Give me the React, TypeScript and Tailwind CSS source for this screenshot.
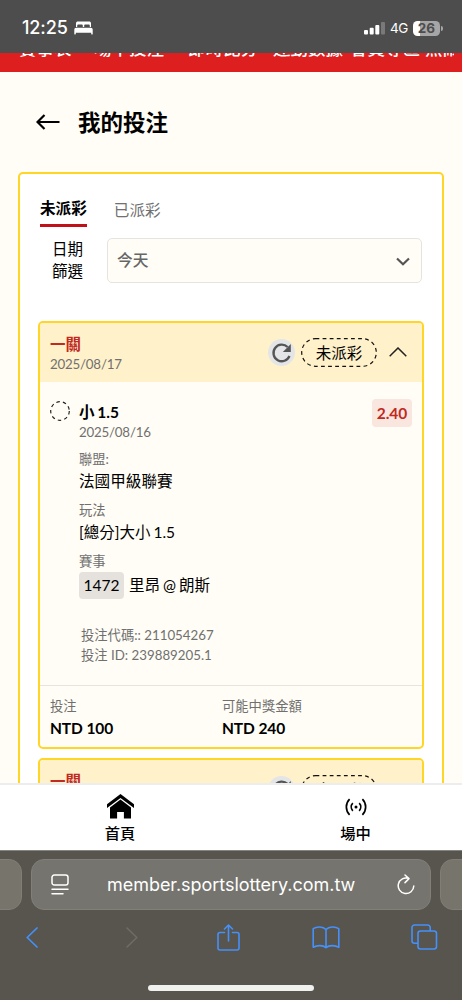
import React from 'react';

interface Bet {
  id: string;
  title: string;
  createdAt: string;
  status: string;
  pick: string;
  matchDate: string;
  odds: string;
  league: string;
  market: string;
  matchNo: string;
  teams: string;
  code: string;
  stake: string;
  payout: string;
}

const bets: Bet[] = [
  {
    id: '239889205.1',
    title: '一關',
    createdAt: '2025/08/17',
    status: '未派彩',
    pick: '小 1.5',
    matchDate: '2025/08/16',
    odds: '2.40',
    league: '法國甲級聯賽',
    market: '[總分]大小 1.5',
    matchNo: '1472',
    teams: '里昂 @ 朗斯',
    code: '211054267',
    stake: 'NTD 100',
    payout: 'NTD 240',
  },
];

const StatusBar = () => (
  <div className="h-[53px] shrink-0 bg-[#4d4d4d] text-white flex items-center justify-between pl-[22px] pr-[19px] pt-[3px] font-['Inter',sans-serif]">
    <div className="flex items-center gap-[5px]">
      <span className="text-[18px] leading-6 font-medium w-[47px] whitespace-nowrap tracking-[-0.1px]">12:25</span>
      <svg width="19" height="14" viewBox="0 0 19 14" fill="#fff">
        <path d="M2 6V2.4C2 1 2.8.5 4 .5h11c1.200 0 2 .5 2 1.900V6h-1.200V4.800c0-.9-.5-1.300-1.300-1.300h-3c-.9 0-1.300.4-1.300 1.300V6H8.800V4.800c0-.9-.5-1.300-1.300-1.300h-3c-.8 0-1.300.4-1.300 1.300V6z" />
        <path d="M.3 13V9c0-1.500.7-2.300 2-2.300h14.400c1.300 0 2 .8 2 2.300v4c0 .4-.2.5-.5.5h-.5c-.3 0-.5-.2-.5-.5v-1.200H1.800V13c0 .3-.2.5-.5.5H.8c-.3 0-.5-.2-.5-.5z" />
      </svg>
    </div>
    <div className="flex items-center">
      <svg width="21" height="14" viewBox="0 0 21 14" fill="#fff" className="mr-[5px]">
        <rect x="0" y="9" width="4" height="4.500" rx="1" />
        <rect x="5.700" y="6.700" width="4" height="6.800" rx="1" />
        <rect x="11.300" y="4" width="4" height="9.500" rx="1" />
        <rect x="17" y="1" width="4" height="12.500" rx="1" opacity=".25" />
      </svg>
      <span className="text-[13.5px] leading-5 w-[19px] mr-[4px] whitespace-nowrap tracking-[-0.4px]">4G</span>
      <div className="flex items-center gap-px">
        <div className="w-[27px] h-[15px] rounded-[4.5px] bg-[linear-gradient(90deg,#fff_27%,#a6a6a6_27%)] text-[#4d4d4d] text-[13.5px] font-bold leading-[15px] text-center">26</div>
        <div className="w-[2px] h-[5px] rounded-r-full bg-[#a6a6a6]"></div>
      </div>
    </div>
  </div>
);

// Site menu, mostly scrolled away under the status bar
const SiteMenu = () => (
  <div className="h-[19px] shrink-0 overflow-hidden bg-[#dd1f20] text-white text-[17.5px] font-medium leading-[20px]">
    <div className="flex -mt-[14px] pl-[19px] whitespace-nowrap">
      <span className="w-[75px]">賽事表</span>
      <span className="w-[94px]">場中投注</span>
      <span className="w-[85px]">即時比分</span>
      <span className="w-[77px]">運動數據</span>
      <span className="w-[75px]">會員專區</span>
      <span className="w-[29px] overflow-hidden">熱鬧</span>
    </div>
  </div>
);

const RefreshIcon = () => (
  <span className="w-[27px] h-[27px] rounded-full bg-[#e4e5e7] flex items-center justify-center">
    <svg width="27" height="27" viewBox="0 0 27 27" fill="none" stroke="#555" strokeWidth="2.300">
      <path d="M21.500 17A8.300 8.300 0 1 1 19.600 8" />
      <path d="M22.800 5v8h-8z" fill="#555" stroke="none" />
    </svg>
  </span>
);

const BetCard: React.FC<{ bet: Bet }> = ({ bet }) => (
  <article className="rounded-[5px] border-2 border-[#ffd526] bg-[#fffdf5] overflow-hidden">
    <header className="h-[59px] bg-[#fff1ca] flex justify-between pl-[10px] pr-[15px]">
      <div className="pt-[11px]">
        <h2 className="text-[15.5px] leading-5 font-bold text-[#bf2a23]">{bet.title}</h2>
        <p className="text-[13.3px] leading-5 tracking-[-0.2px] text-[#707070]">{bet.createdAt}</p>
      </div>
      <div className="flex items-center h-[29px] mt-[15px]">
        <RefreshIcon />
        <div className="relative w-[76px] h-[29px] ml-[6px] mr-[12px] text-[15.5px] leading-[30px] text-center">
          <svg width="76" height="29" className="absolute inset-0" fill="none" stroke="#111" strokeWidth="1.200">
            <rect x=".7" y=".7" width="74.600" height="27.600" rx="13.800" strokeDasharray="3.800 3.300" />
          </svg>
          {bet.status}
        </div>
        <svg width="18" height="10" viewBox="0 0 18 10" fill="none" stroke="#222" strokeWidth="1.500" className="-mt-[2px]">
          <path d="M.7 9.300 9 1l8.300 8.300" />
        </svg>
      </div>
    </header>

    <div className="flex pl-[10px] pr-[10px] pt-[17px] pb-[19px]">
      <svg width="20" height="20" viewBox="0 0 20 20" className="mt-[2px] mr-[9px] shrink-0" fill="none" stroke="#222" strokeWidth="1.200">
        <circle cx="10" cy="10" r="9.300" strokeDasharray="3.500 3.140" />
      </svg>
      <div className="flex-1 pt-[3px]">
        <h3 className="text-[15.5px] leading-5 font-bold [word-spacing:-1px]">{bet.pick}</h3>
        <p className="text-[13.3px] leading-5 tracking-[-0.2px] text-[#707070]">{bet.matchDate}</p>
        <p className="mt-[7px] text-[13.3px] leading-5 text-[#707070]">聯盟:</p>
        <p className="text-[15.6px] leading-6">{bet.league}</p>
        <p className="mt-[7px] text-[13.3px] leading-5 text-[#707070]">玩法</p>
        <p className="text-[15.5px] leading-6 [word-spacing:-1px]">{bet.market}</p>
        <p className="mt-[7px] text-[13.3px] leading-5 text-[#707070]">賽事</p>
        <div className="mt-px flex items-center gap-[5px] text-[15.5px] leading-[27px]">
          <span className="w-[45px] h-[27px] rounded-[4px] bg-[#e5e2dd] text-center">{bet.matchNo}</span>
          <span className="[word-spacing:-1px]">{bet.teams}</span>
        </div>
        <div className="mt-[26px] pl-[2px] text-[13.3px] leading-5 text-[#707070]">
          <p>投注代碼:: {bet.code}</p>
          <p>投注 ID: {bet.id}</p>
        </div>
        <div className="h-px"></div>
      </div>
      <span className="w-10 h-7 rounded-[4px] bg-[#f8e6df] text-[#bf2a23] text-[15.5px] leading-[28px] font-bold text-center">
        {bet.odds}
      </span>
    </div>

    <footer className="flex h-[62px] border-t border-[#e5e4e1] pl-[10px] pt-[10px]">
      <div className="w-[172px]">
        <p className="text-[13.3px] leading-5 text-[#707070]">投注</p>
        <p className="mt-[2px] text-[15.5px] leading-5 font-bold tracking-[-0.1px]">{bet.stake}</p>
      </div>
      <div>
        <p className="text-[13.3px] leading-5 text-[#707070]">可能中獎金額</p>
        <p className="mt-[2px] text-[15.5px] leading-5 font-bold tracking-[-0.1px]">{bet.payout}</p>
      </div>
    </footer>
  </article>
);

const BottomNav = () => (
  <nav className="h-[67px] shrink-0 border-t-2 border-[#ededed] bg-white flex text-[15.3px] leading-5 font-medium">
    <div className="w-[240px] shrink-0 flex flex-col items-center pt-[9px]">
      <svg width="27" height="25" viewBox="0 0 27 25" fill="#000">
        <path d="M13.500 0 27 10.300v3.700L13.500 4 0 14v-3.700z" />
        <path d="M13.500 5.600 24 13.400V24.500h-7.100V18h-6.800v6.500H3V13.400z" />
      </svg>
      <span className="mt-[4px]">首頁</span>
    </div>
    <div className="w-[231px] shrink-0 flex flex-col items-center pt-[13px]">
      <svg width="22" height="18" viewBox="0 0 22 18" fill="none" stroke="#000" strokeWidth="1.700">
        <circle cx="11" cy="9" r="1.500" fill="#000" stroke="none" />
        <path d="M7.800 5.200a5.500 5.500 0 0 0 0 7.600M14.200 5.200a5.500 5.500 0 0 1 0 7.600M4.600 1.200a11 11 0 0 0 0 15.600M17.400 1.200a11 11 0 0 1 0 15.600" />
      </svg>
      <span className="mt-[7px]">場中</span>
    </div>
  </nav>
);

const BrowserBar = () => (
  <div className="h-[150px] shrink-0 bg-[#57554d] border-t border-[#858580] overflow-hidden flex flex-col">
    <div className="mt-[8px] h-[51px] flex gap-[9px] -ml-[20px] w-[502px]">
      <div className="w-[42px] rounded-[13px] bg-[#77746c] border border-[#817e76]"></div>
      <div className="w-[400px] rounded-[13px] bg-[#75746e] border border-[#807f78] flex items-center text-white">
        <svg width="18" height="21" viewBox="0 0 18 21" fill="none" stroke="#fff" strokeWidth="1.500" strokeLinecap="round" className="ml-[19px]">
          <rect x="1" y="1" width="16" height="10" rx="2.300" />
          <path d="M1 15.300h16M1 19.700h11" />
        </svg>
        <span className="ml-[38px] w-[249px] text-[18px] tracking-[-0.04px] font-['Inter',sans-serif] whitespace-nowrap">member.sportslottery.com.tw</span>
        <svg width="18" height="21" viewBox="0 0 18 21" fill="none" stroke="#fff" strokeWidth="1.500" strokeLinecap="round" strokeLinejoin="round" className="ml-[41px]">
          <path d="M11.700 4.400A7.800 7.800 0 1 0 16.800 12M8 1l4 3.600-4 4" />
        </svg>
      </div>
      <div className="w-[42px] rounded-[13px] bg-[#77746c] border border-[#817e76]"></div>
    </div>
    <div className="mt-[13px] h-[28px] flex items-center pl-[26px]">
      <svg width="12" height="21" viewBox="0 0 12 21" fill="none" stroke="#4590fa" strokeWidth="1.700" strokeLinecap="round" strokeLinejoin="round">
        <path d="M11 1 1.200 10.500 11 20" />
      </svg>
      <svg width="12" height="21" viewBox="0 0 12 21" fill="none" stroke="#6d6c66" strokeWidth="1.600" strokeLinecap="round" strokeLinejoin="round" className="ml-[88px]">
        <path d="m1 1 9.800 9.500L1 20" />
      </svg>
      <svg width="23" height="27" viewBox="0 0 23 27" fill="none" stroke="#4590fa" strokeWidth="1.600" strokeLinecap="round" strokeLinejoin="round" className="ml-[79px]">
        <path d="M7.500 8.500H3a2 2 0 0 0-2 2V24a2 2 0 0 0 2 2h17a2 2 0 0 0 2-2V10.500a2 2 0 0 0-2-2h-4.500M11.500 17V1.200M7.500 5l4-4 4 4" />
      </svg>
      <svg width="28" height="23" viewBox="0 0 28 23" fill="none" stroke="#4590fa" strokeWidth="1.600" strokeLinejoin="round" className="ml-[72px]">
        <path d="M14 3.500C11 .4 5 .2 1.200 2.700v18.600C5 19 11 19 14 21.700c3-2.700 9-2.700 12.800-.4V2.700C23 .2 17 .4 14 3.500zM14 3.500v18.200" />
      </svg>
      <svg width="27" height="26" viewBox="0 0 27 26" fill="none" stroke="#4590fa" strokeWidth="1.600" className="ml-[71px]">
        <rect x="7" y="7" width="18.500" height="18" rx="2.500" />
        <path d="M7 19.300H3.500A2.500 2.500 0 0 1 1 16.800V3.500A2.500 2.500 0 0 1 3.500 1h13.200a2.500 2.500 0 0 1 2.500 2.500V7" />
      </svg>
    </div>
    <div className="mt-[34px] mx-auto w-[166px] h-[6px] shrink-0 rounded-full bg-[#f0f0ee]"></div>
  </div>
);

export default function App() {
  return (
    <div className="w-[462px] h-[1000px] overflow-hidden flex flex-col bg-[#fffdf5] text-black font-['Lato','Noto_Sans_CJK_TC',sans-serif]">
      <StatusBar />
      <SiteMenu />

      <main className="flex-1 min-h-0 overflow-hidden">
        <div className="h-[100px] flex items-center pl-[36px] gap-[18px]">
          <svg width="24" height="16" viewBox="0 0 24 16" fill="none" stroke="#000" strokeWidth="2.200">
            <path d="M23.500 8H1.500M8.500 1l-7 7 7 7" />
          </svg>
          <h1 className="mt-[2px] text-[22.5px] leading-8 font-bold">我的投注</h1>
        </div>

        <section className="mx-[18px] h-[900px] rounded-[5px] border-2 border-[#ffd526] bg-white px-[18px]">
          <div className="pl-[2px] pt-[21px] flex gap-[27px] text-[15.6px]">
            <button className="h-[32px] flex flex-col items-start border-b-[3px] border-[#c0101a] pt-[2px] leading-[22px] font-bold">未派彩</button>
            <button className="h-[32px] flex flex-col items-start pt-[4px] leading-[22px] text-[#707070]">已派彩</button>
          </div>

          <div className="mt-[11px] flex items-center">
            <label className="w-[69px] pl-[14px] pr-[20px] -mt-px text-[15.5px] leading-[22px]">日期篩選</label>
            <div className="w-[315px] h-[45px] rounded-[5px] border border-[#e5e4e1] bg-[#fffdf5] flex items-center justify-between pl-[9px] pr-[11px]">
              <span className="text-[15.7px] font-medium text-[#666]">今天</span>
              <svg width="14" height="9" viewBox="0 0 14 9" fill="none" stroke="#555" strokeWidth="2.200" className="mt-px">
                <path d="m1 1.500 6 5.700 6-5.700" />
              </svg>
            </div>
          </div>

          <div className="mt-[38px] flex flex-col gap-[9px]">
            {bets.map(bet => (
              <BetCard key={bet.id} bet={bet} />
            ))}
            <BetCard bet={bets[0]} />
          </div>
        </section>
      </main>

      <BottomNav />
      <BrowserBar />
    </div>
  );
}
